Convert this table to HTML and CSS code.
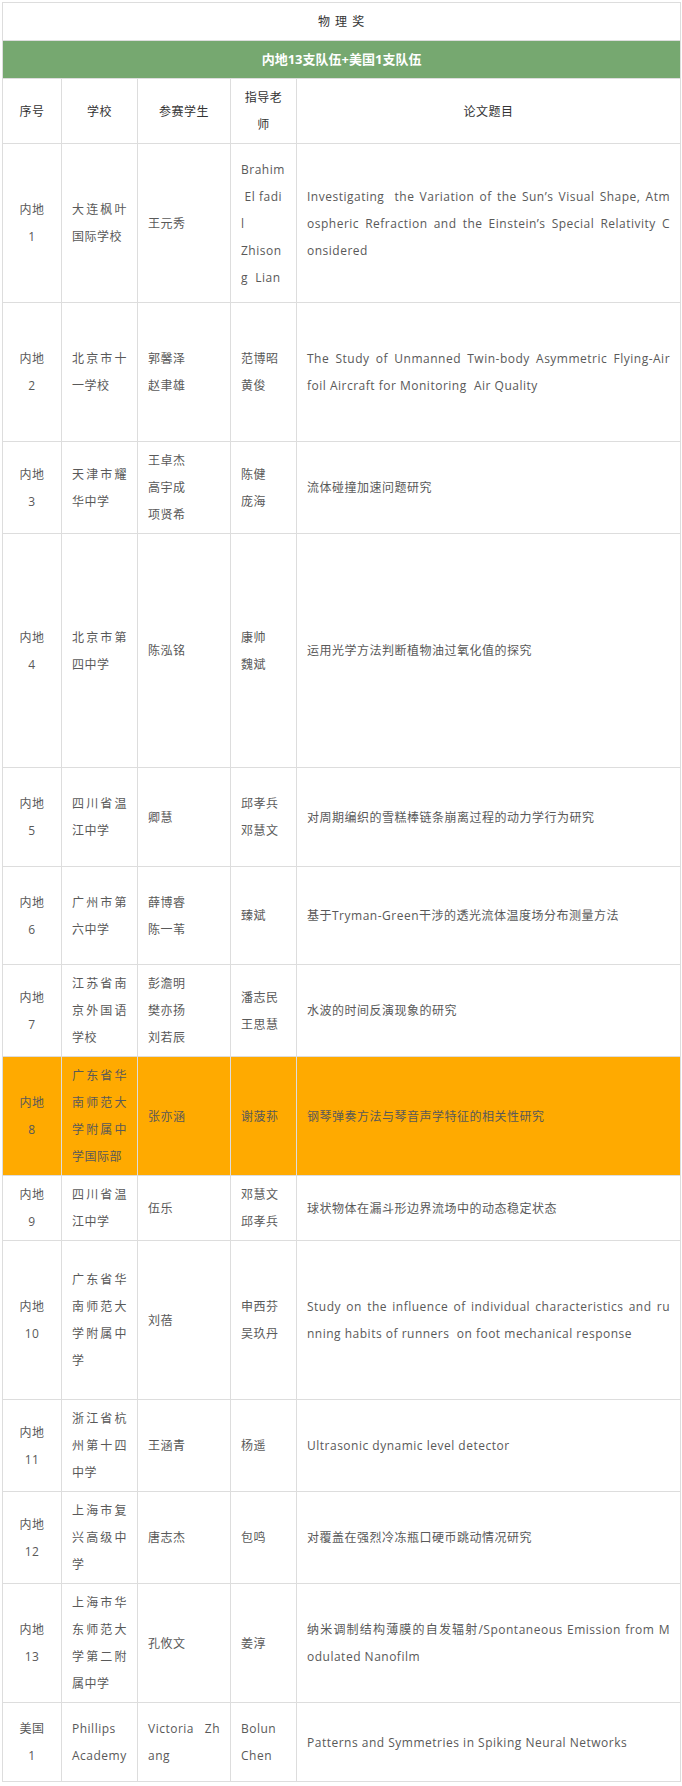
FILE: index.html
```html
<!DOCTYPE html>
<html lang="zh-CN">
<head>
<meta charset="utf-8">
<title>物理奖</title>
<link rel="stylesheet" href="styles.css">
</head>
<body>
<div class="page">
<table class="award">
<colgroup>
<col class="c-no"><col class="c-school"><col class="c-student"><col class="c-teacher"><col class="c-title">
</colgroup>
<tr class="title-row"><td colspan="5" class="title">物 理 奖</td></tr>
<tr class="group-row"><td colspan="5" class="group">内地13支队伍+美国1支队伍</td></tr>
<tr class="head-row">
<td class="hd">序号</td><td class="hd">学校</td><td class="hd">参赛学生</td><td class="hd"><span class="ln">指导老</span><span class="ln">师</span></td><td class="hd">论文题目</td>
</tr>
<tr class="h159">
<td class="no"><span class="ln">内地</span><span class="ln">1</span></td>
<td><span class="ln j">大连枫叶</span><span class="ln">国际学校</span></td>
<td><span class="ln">王元秀</span></td>
<td><span class="ln">Brahim</span><span class="ln">&nbsp;El fadi</span><span class="ln">l</span><span class="ln">Zhison</span><span class="ln">g&nbsp; Lian</span></td>
<td><span class="ln j">Investigating&nbsp; the Variation of the Sun’s Visual Shape, Atm</span><span class="ln j">ospheric Refraction and the Einstein’s Special Relativity C</span><span class="ln">onsidered</span></td>
</tr>
<tr class="h139">
<td class="no"><span class="ln">内地</span><span class="ln">2</span></td>
<td><span class="ln j">北京市十</span><span class="ln">一学校</span></td>
<td><span class="ln">郭馨泽</span><span class="ln">赵聿雄</span></td>
<td><span class="ln">范博昭</span><span class="ln">黄俊</span></td>
<td><span class="ln j">The Study of Unmanned Twin-body Asymmetric Flying-Air</span><span class="ln">foil Aircraft for Monitoring&nbsp; Air Quality</span></td>
</tr>
<tr class="h92">
<td class="no"><span class="ln">内地</span><span class="ln">3</span></td>
<td><span class="ln j">天津市耀</span><span class="ln">华中学</span></td>
<td><span class="ln">王卓杰</span><span class="ln">高宇成</span><span class="ln">项贤希</span></td>
<td><span class="ln">陈健</span><span class="ln">庞海</span></td>
<td><span class="ln">流体碰撞加速问题研究</span></td>
</tr>
<tr class="h234">
<td class="no"><span class="ln">内地</span><span class="ln">4</span></td>
<td><span class="ln j">北京市第</span><span class="ln">四中学</span></td>
<td><span class="ln">陈泓铭</span></td>
<td><span class="ln">康帅</span><span class="ln">魏斌</span></td>
<td><span class="ln">运用光学方法判断植物油过氧化值的探究</span></td>
</tr>
<tr class="h99">
<td class="no"><span class="ln">内地</span><span class="ln">5</span></td>
<td><span class="ln j">四川省温</span><span class="ln">江中学</span></td>
<td><span class="ln">卿慧</span></td>
<td><span class="ln">邱孝兵</span><span class="ln">邓慧文</span></td>
<td><span class="ln">对周期编织的雪糕棒链条崩离过程的动力学行为研究</span></td>
</tr>
<tr class="h98">
<td class="no"><span class="ln">内地</span><span class="ln">6</span></td>
<td><span class="ln j">广州市第</span><span class="ln">六中学</span></td>
<td><span class="ln">薛博睿</span><span class="ln">陈一苇</span></td>
<td><span class="ln">臻斌</span></td>
<td><span class="ln">基于Tryman-Green干涉的透光流体温度场分布测量方法</span></td>
</tr>
<tr class="h92">
<td class="no"><span class="ln">内地</span><span class="ln">7</span></td>
<td><span class="ln j">江苏省南</span><span class="ln j">京外国语</span><span class="ln">学校</span></td>
<td><span class="ln">彭澹明</span><span class="ln">樊亦扬</span><span class="ln">刘若辰</span></td>
<td><span class="ln">潘志民</span><span class="ln">王思慧</span></td>
<td><span class="ln">水波的时间反演现象的研究</span></td>
</tr>
<tr class="h119 hl">
<td class="no"><span class="ln">内地</span><span class="ln">8</span></td>
<td><span class="ln j">广东省华</span><span class="ln j">南师范大</span><span class="ln j">学附属中</span><span class="ln">学国际部</span></td>
<td><span class="ln">张亦涵</span></td>
<td><span class="ln">谢菠荪</span></td>
<td><span class="ln">钢琴弹奏方法与琴音声学特征的相关性研究</span></td>
</tr>
<tr class="h65">
<td class="no"><span class="ln">内地</span><span class="ln">9</span></td>
<td><span class="ln j">四川省温</span><span class="ln">江中学</span></td>
<td><span class="ln">伍乐</span></td>
<td><span class="ln">邓慧文</span><span class="ln">邱孝兵</span></td>
<td><span class="ln">球状物体在漏斗形边界流场中的动态稳定状态</span></td>
</tr>
<tr class="h159">
<td class="no"><span class="ln">内地</span><span class="ln">10</span></td>
<td><span class="ln j">广东省华</span><span class="ln j">南师范大</span><span class="ln j">学附属中</span><span class="ln">学</span></td>
<td><span class="ln">刘蓓</span></td>
<td><span class="ln">申西芬</span><span class="ln">吴玖丹</span></td>
<td><span class="ln j">Study on the influence of individual characteristics and ru</span><span class="ln">nning habits of runners&nbsp; on foot mechanical response</span></td>
</tr>
<tr class="h92">
<td class="no"><span class="ln">内地</span><span class="ln">11</span></td>
<td><span class="ln j">浙江省杭</span><span class="ln j">州第十四</span><span class="ln">中学</span></td>
<td><span class="ln">王涵青</span></td>
<td><span class="ln">杨遥</span></td>
<td><span class="ln">Ultrasonic dynamic level detector</span></td>
</tr>
<tr class="h92">
<td class="no"><span class="ln">内地</span><span class="ln">12</span></td>
<td><span class="ln j">上海市复</span><span class="ln j">兴高级中</span><span class="ln">学</span></td>
<td><span class="ln">唐志杰</span></td>
<td><span class="ln">包鸣</span></td>
<td><span class="ln">对覆盖在强烈冷冻瓶口硬币跳动情况研究</span></td>
</tr>
<tr class="h119">
<td class="no"><span class="ln">内地</span><span class="ln">13</span></td>
<td><span class="ln j">上海市华</span><span class="ln j">东师范大</span><span class="ln j">学第二附</span><span class="ln">属中学</span></td>
<td><span class="ln">孔攸文</span></td>
<td><span class="ln">姜淳</span></td>
<td><span class="ln j">纳米调制结构薄膜的自发辐射/Spontaneous Emission from M</span><span class="ln">odulated Nanofilm</span></td>
</tr>
<tr class="h79">
<td class="no"><span class="ln">美国</span><span class="ln">1</span></td>
<td><span class="ln">Phillips</span><span class="ln">Academy</span></td>
<td><span class="ln j">Victoria&nbsp; Zh</span><span class="ln">ang</span></td>
<td><span class="ln">Bolun</span><span class="ln">Chen</span></td>
<td><span class="ln">Patterns and Symmetries in Spiking Neural Networks</span></td>
</tr>
</table>
</div>
</body>
</html>
```
FILE: styles.css
```css
html, body {
  margin: 0;
  padding: 0;
  background: #ffffff;
}
.page {
  padding: 2px 2px 0 2px;
}
.award {
  width: 678px;
  border-collapse: collapse;
  table-layout: fixed;
  font-family: "Open Sans", "Noto Sans CJK SC", sans-serif;
  font-size: 12px;
  letter-spacing: 0.5px;
  line-height: 27px;
  color: #595959;
}
.c-no { width: 59px; }
.c-school { width: 76px; }
.c-student { width: 93px; }
.c-teacher { width: 66px; }
.c-title { width: 384px; }
.award td {
  border: 1px solid #dddddd;
  padding: 5px 10px;
  vertical-align: middle;
  text-align: left;
}
.ln {
  display: block;
  white-space: nowrap;
}
.ln.j {
  text-align: justify;
  text-align-last: justify;
}
.award td.no { text-align: center; }
.award td.title {
  text-align: center;
  color: #333333;
  font-weight: 400;
  letter-spacing: 1px;
}
.award td.group {
  text-align: center;
  background: #76a870;
  color: #ffffff;
  font-weight: 700;
  font-size: 13px;
  letter-spacing: 0;
}
.award td.hd {
  text-align: center;
  color: #333333;
}
.hl td { background: #ffaa00; }
.h65 { height: 65px; }
.h79 { height: 79px; }
.h92 { height: 92px; }
.h98 { height: 98px; }
.h99 { height: 99px; }
.h119 { height: 119px; }
.h139 { height: 139px; }
.h159 { height: 159px; }
.h234 { height: 234px; }
```
